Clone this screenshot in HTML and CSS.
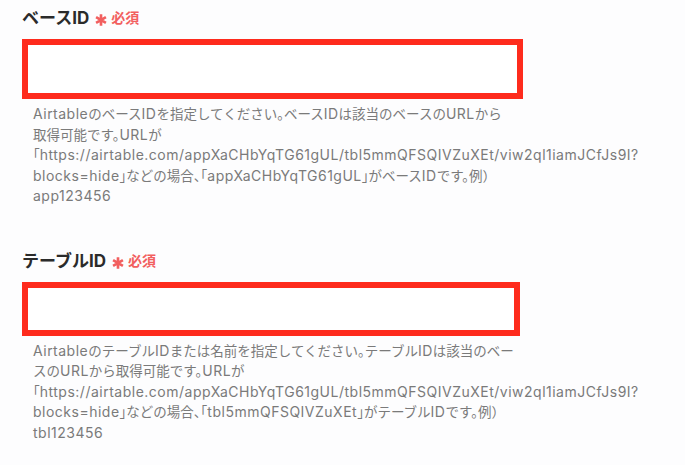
FILE: index.html
```html
<!DOCTYPE html>
<html lang="ja">
<head>
<meta charset="utf-8">
<link rel="stylesheet" href="styles.css">
</head>
<body>
<div class="form">
  <div class="field">
    <div class="label">ベースID<span class="req"><svg class="ast" viewBox="0 0 10 10" width="12" height="12"><path d="M5 0.3V9.7M0.9 2.6L9.1 7.4M9.1 2.6L0.9 7.4" stroke="#f25f5f" stroke-width="2.2" fill="none"/></svg>必須</span></div>
    <div class="input"></div>
    <p class="desc"><span class="lt">Airtable</span>のベース<span class="lt">ID</span>を指定してください。ベース<span class="lt">ID</span>は該当のベースの<span class="lt">URL</span>から<br>取得可能です。<span class="lt">URL</span>が<br>「<span class="lt">https://airtable.com/appXaCHbYqTG61gUL/tbl5mmQFSQIVZuXEt/viw2ql1iamJCfJs9I?</span><br><span class="lt">blocks=hide</span>」などの場合、「<span class="lt">appXaCHbYqTG61gUL</span>」がベース<span class="lt">ID</span>です。例）<br><span class="lt">app123456</span></p>
  </div>
  <div class="field">
    <div class="label">テーブルID<span class="req"><svg class="ast" viewBox="0 0 10 10" width="12" height="12"><path d="M5 0.3V9.7M0.9 2.6L9.1 7.4M9.1 2.6L0.9 7.4" stroke="#f25f5f" stroke-width="2.2" fill="none"/></svg>必須</span></div>
    <div class="input input-short"></div>
    <p class="desc"><span class="lt">Airtable</span>のテーブル<span class="lt">ID</span>または名前を指定してください。テーブル<span class="lt">ID</span>は該当のベー<br>スの<span class="lt">URL</span>から取得可能です。<span class="lt">URL</span>が<br>「<span class="lt">https://airtable.com/appXaCHbYqTG61gUL/tbl5mmQFSQIVZuXEt/viw2ql1iamJCfJs9I?</span><br><span class="lt">blocks=hide</span>」などの場合、「<span class="lt">tbl5mmQFSQIVZuXEt</span>」がテーブル<span class="lt">ID</span>です。例）<br><span class="lt">tbl123456</span></p>
  </div>
</div>
</body>
</html>
```
FILE: styles.css
```css
html, body {
  margin: 0;
  padding: 0;
  background: #fdfdfe;
}
body {
  font-family: Inter, "Noto Sans CJK JP", sans-serif;
  font-feature-settings: "halt";
}
.form {
  padding: 8px 0 0 22px;
  display: flex;
  flex-direction: column;
  gap: 44px;
}
.field {
  display: flex;
  flex-direction: column;
}
.label {
  font-size: 17px;
  font-weight: 700;
  color: #2b2b2b;
  line-height: 20px;
  display: flex;
  align-items: center;
}
.req {
  color: #f25f5f;
  font-size: 14px;
  font-weight: 700;
  margin-left: 6px;
  display: flex;
  align-items: center;
}
.ast {
  margin-right: 4px;
  position: relative;
  top: 2px;
}
.input {
  margin-top: 11px;
  width: 501px;
  height: 60px;
  box-sizing: border-box;
  border: 6px solid #fe2b1d;
  background: #fff;
}
.input-short {
  width: 498px;
  height: 54px;
}
.desc {
  margin: 5px 0 0 11px;
  font-size: 13.5px;
  line-height: 20.5px;
  color: #7a7a7a;
  white-space: nowrap;
}
.lt {
  font-size: 14px;
  letter-spacing: 0.5px;
}
```
